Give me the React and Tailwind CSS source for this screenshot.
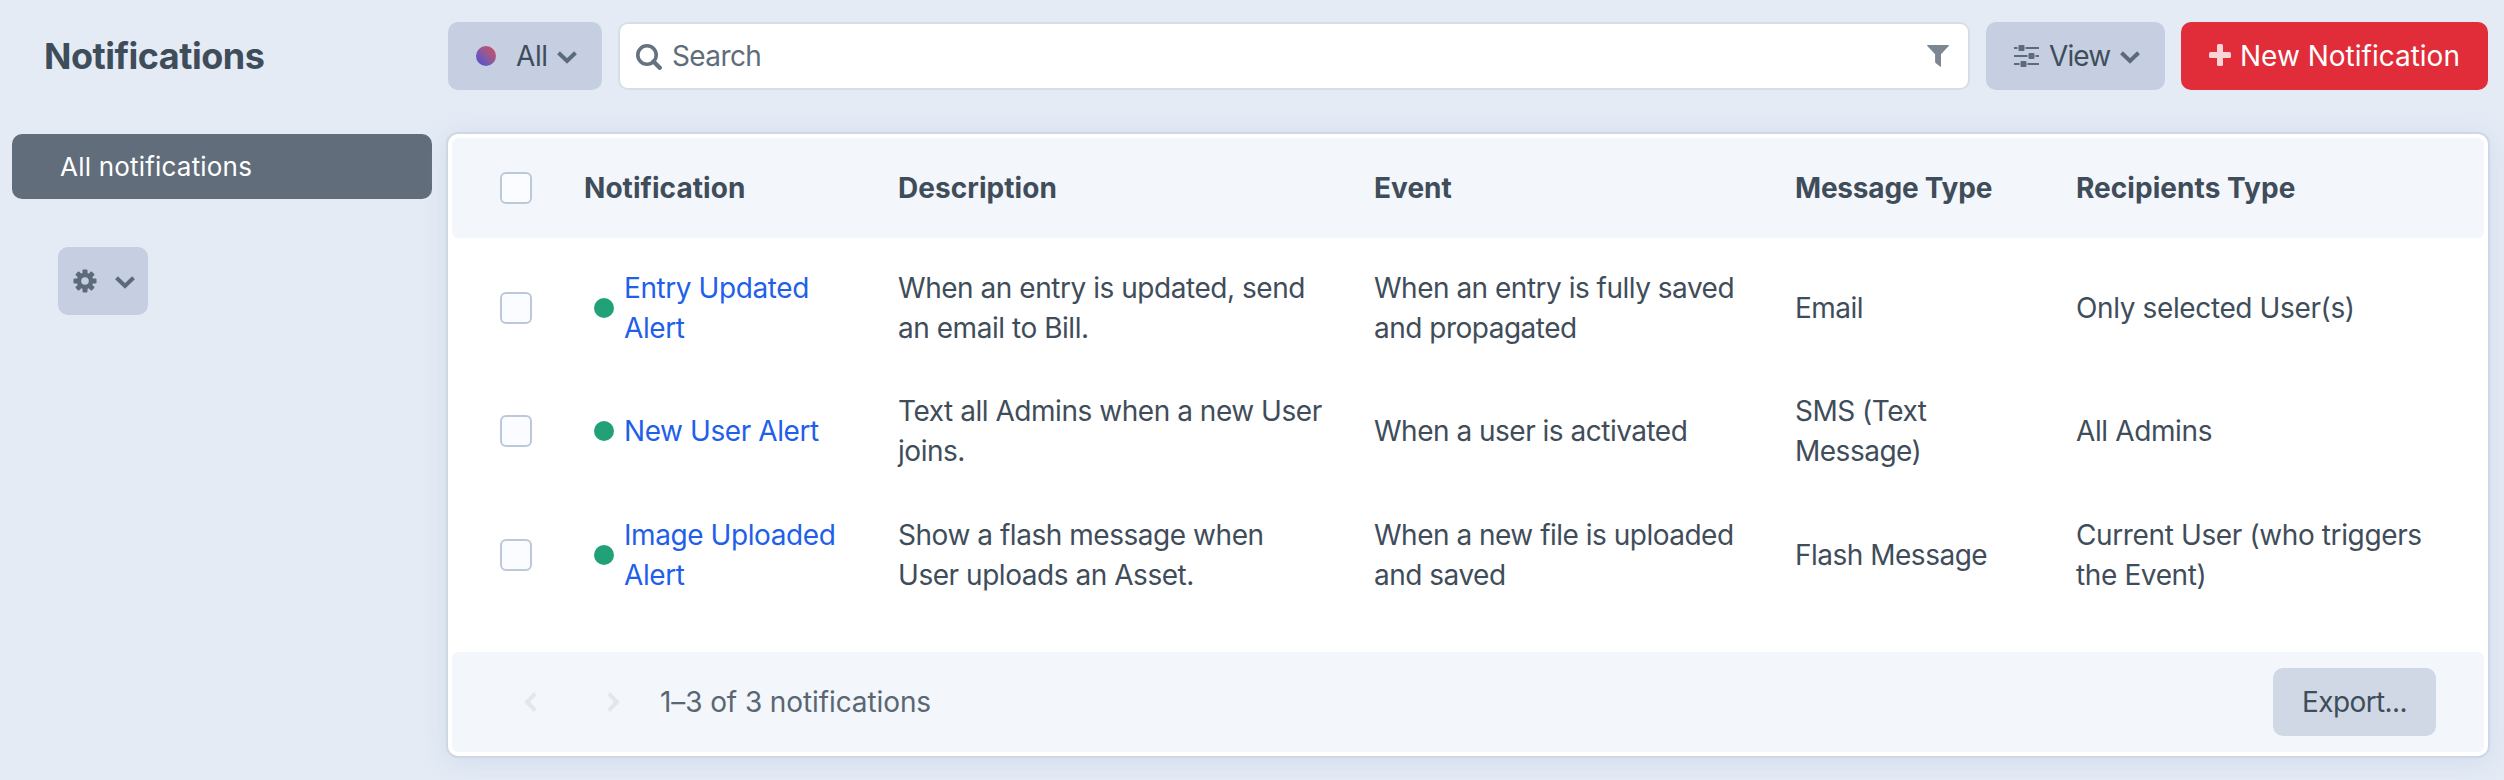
const rows = [
  {
    name: "Entry Updated Alert",
    description: "When an entry is updated, send an email to Bill.",
    event: "When an entry is fully saved and propagated",
    type: "Email",
    recipients: "Only selected User(s)",
  },
  {
    name: "New User Alert",
    description: "Text all Admins when a new User joins.",
    event: "When a user is activated",
    type: "SMS (Text Message)",
    recipients: "All Admins",
  },
  {
    name: "Image Uploaded Alert",
    description: "Show a flash message when User uploads an Asset.",
    event: "When a new file is uploaded and saved",
    type: "Flash Message",
    recipients: "Current User (who triggers the Event)",
  },
];

const GRID = "grid grid-cols-[84px_314px_476px_421px_281px_1fr] items-center pl-12";

function Chevron({ className = "" }) {
  return (
    <svg viewBox="0 0 20 13" className={`h-[13px] w-5 shrink-0 fill-none stroke-[#5c6b7a] ${className}`}>
      <path d="M1.500 1.700 L10 10 L18.500 1.700" strokeWidth="4" />
    </svg>
  );
}

function PageArrow({ next = false }) {
  return (
    <svg viewBox="0 0 13 20" className="h-5 w-[13px] shrink-0 fill-none stroke-[#e3e7ec]">
      <path d={next ? "M1.700 1.500 L10 10 L1.700 18.500" : "M11.300 1.500 L3 10 L11.300 18.500"} strokeWidth="4" />
    </svg>
  );
}

function Gear() {
  return (
    <svg viewBox="-12 -12 24 24" className="size-6 shrink-0 fill-[#5c6b7a]">
      {[0, 45, 90, 135].map((a) => (
        <rect key={a} x="-2.5" y="-11.5" width="5" height="23" rx="1" transform={`rotate(${a})`} />
      ))}
      <circle r="8.3" />
      <circle r="3.8" className="fill-[#c5cfe1]" />
    </svg>
  );
}

function Sliders() {
  return (
    <svg viewBox="0 0 25 24" className="h-6 w-[25px] shrink-0 fill-[#5c6b7a]">
      <path d="M0 3h3.500v2H0zM11.500 3H25v2H11.500zM0 11h13.500v2H0zM21.500 11H25v2h-3.500zM0 19h5.500v2H0zM13.500 19H25v2H13.500z" />
      <rect x="4.500" y="1" width="6" height="6" rx="1" />
      <rect x="14.500" y="9" width="6" height="6" rx="1" />
      <rect x="6.500" y="17" width="6" height="6" rx="1" />
    </svg>
  );
}

function Checkbox() {
  return <span className="size-8 rounded-[6px] border-2 border-[#bcc9d8] bg-[#fafcff]" />;
}

export default function App() {
  return (
    <div className="flex h-[780px] w-[2504px] overflow-hidden bg-[#e4ebf5] font-['Inter','Noto_Sans',sans-serif] text-[28px] leading-10 tracking-[-0.42px] text-[#3f4d5a]">
      <aside className="w-[446px] shrink-0">
        <h1 className="pt-9 pl-[44px] text-[36px] leading-10 font-bold tracking-[-0.5px]">Notifications</h1>
        <nav className="mt-[58px] ml-3 flex h-[65px] w-[420px] items-center rounded-[10px] bg-[#616d7b] pt-px pl-12 text-[26px] tracking-[0.2px] text-white">
          All notifications
        </nav>
        <button className="mt-12 ml-[58px] flex h-[68px] w-[90px] items-center gap-[18px] rounded-[10px] bg-[#c5cfe1] pl-[15px]">
          <Gear />
          <Chevron className="mt-[3px]" />
        </button>
      </aside>

      <main className="w-[2044px] shrink-0 pt-[22px]">
        <div className="flex h-[68px] pr-0.5 pl-0.5">
          <button className="flex w-[154px] items-center rounded-[10px] bg-[#c5cfe1] pl-7">
            <span className="size-5 rounded-full bg-linear-to-tr from-[#3e46e0] to-[#d7434a]" />
            <span className="ml-5 w-[41px] text-left">All</span>
            <Chevron className="mt-[3px]" />
          </button>
          <div className="ml-4 flex w-[1352px] items-center rounded-[10px] border-2 border-[#d7dee8] bg-white pr-[19px] pl-4 text-[#5f6d7b]">
            <svg viewBox="0 0 26 26" className="mt-0.5 size-[26px] shrink-0 fill-none stroke-[#657280]">
              <circle cx="11" cy="11" r="9.2" strokeWidth="3.6" />
              <path d="M17.500 17.500 L23.700 23.700" strokeWidth="4.400" strokeLinecap="round" />
            </svg>
            <span className="ml-2.5 grow tracking-[-0.6px]">Search</span>
            <svg viewBox="0 0 22 22" className="h-[22px] w-[22px] shrink-0 fill-[#7d8792]">
              <path d="M.6 0h20.800q.9 0 .3.900L14 9.300V21q0 1.300-1 .6L8.600 18q-.5-.5-.5-1V9.300L.3.900Q-.3 0 .6 0Z" />
            </svg>
          </div>
          <button className="ml-4 flex w-[179px] items-center rounded-[10px] bg-[#c5cfe1] pl-7">
            <Sliders />
            <span className="ml-2.5 w-[71px] text-left tracking-[-0.9px]">View</span>
            <Chevron className="mt-[3px]" />
          </button>
          <button className="ml-4 flex w-[307px] items-center rounded-[10px] bg-[#e12d39] pl-7 text-white">
            <svg viewBox="0 0 22 22" className="mb-[3px] size-[22px] shrink-0 fill-[#f9d5d7]">
              <rect x="8" width="6" height="22" rx="1.500" />
              <rect y="8" width="22" height="6" rx="1.500" />
            </svg>
            <span className="ml-[9px] tracking-normal">New Notification</span>
          </button>
        </div>

        <section className="mt-[42px] h-[626px] rounded-[12px] border-2 border-[#cdd8e4] bg-white p-1 shadow-[0_4px_24px_rgba(160,180,215,0.28)]">
          <div className={`${GRID} h-[100px] rounded-[6px] bg-[#f3f6fb] font-bold tracking-[0.05px]`}>
            <Checkbox />
            <span>Notification</span>
            <span>Description</span>
            <span>Event</span>
            <span className="tracking-[-0.2px]">Message Type</span>
            <span>Recipients Type</span>
          </div>
          <div className="flex h-[414px] flex-col pt-2">
            {rows.map((row) => (
              <div key={row.name} className={`${GRID} h-[123.5px]`}>
                <Checkbox />
                <div className="flex items-center pl-[10px]">
                  <span className="size-5 shrink-0 rounded-full bg-[#22a179]" />
                  <a className="ml-2.5 w-[225px] tracking-[-0.42px] text-[#1f5fea]">{row.name}</a>
                </div>
                <span className="w-[430px] tracking-[-0.46px]">{row.description}</span>
                <span className="w-[374px] tracking-[-0.5px]">{row.event}</span>
                <span className="w-[210px] tracking-[-0.5px]">{row.type}</span>
                <span className="w-[370px] tracking-[-0.38px]">{row.recipients}</span>
              </div>
            ))}
          </div>
          <div className="flex h-[100px] items-center rounded-[6px] bg-[#f3f6fb] pr-12 pl-[72px] text-[#596673]">
            <PageArrow />
            <span className="w-[70px]" />
            <PageArrow next />
            <span className="ml-[40px] grow tracking-[-0.1px]">1–3 of 3 notifications</span>
            <button className="h-[68px] w-[163px] rounded-[10px] bg-[#d0d8e5] tracking-[-0.6px] text-[#3f4d5a]">Export...</button>
          </div>
        </section>
      </main>
    </div>
  );
}
